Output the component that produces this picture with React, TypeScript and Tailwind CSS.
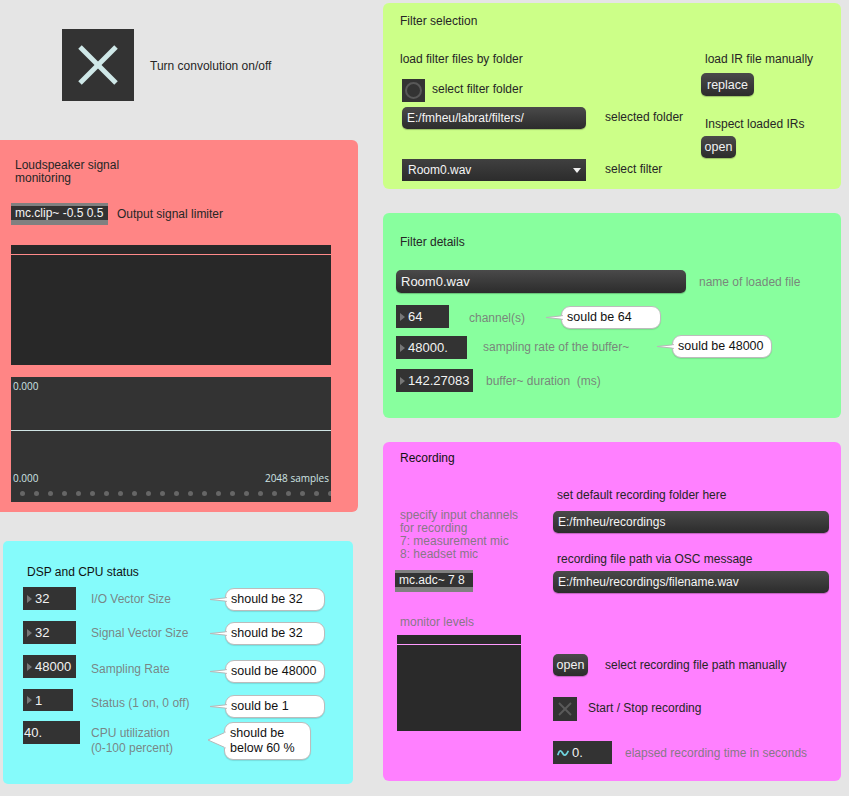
import React from "react";

const GRAY = "text-[#777777]/90";
const DARK = "text-[#262626]";

function NumBox({ value, w, h = "h-[23px]", tri = true }: { value: string; w: string; h?: string; tri?: boolean }) {
  return (
    <div className={`${w} ${h} bg-[#333333] flex items-center shrink-0`}>
      {tri ? (
        <>
          <div className="ml-[4px] w-0 h-0 border-y-[4.5px] border-y-transparent border-l-[5px] border-l-[#777777]" />
          <span className="ml-[3px] text-[13px] text-[#f2f2f2] leading-none">{value}</span>
        </>
      ) : (
        <span className="ml-[1px] text-[13px] text-[#f2f2f2] leading-none">{value}</span>
      )}
    </div>
  );
}

function Bubble({ children, body, h, big = false, mt = "" }: { children: React.ReactNode; body: string; h: number; big?: boolean; mt?: string }) {
  const ptr = big ? 16 : 15;
  const mid = big ? 18 : h / 2;
  const pts = big
    ? `0,${mid} ${ptr + 2},${mid - 8} ${ptr + 2},${mid + 8}`
    : `0,${mid} ${ptr + 2},${mid - 1.8} ${ptr + 2},${mid + 1.8}`;
  return (
    <div className={`flex items-start shrink-0 ${mt}`}>
      <svg width={ptr + 2} height={h} className="-mr-[2px] relative z-10 shrink-0">
        <polygon points={pts} fill="#ffffff" stroke="#b8b8b8" strokeWidth="1" />
        <rect x={ptr + 0.5} y={mid - (big ? 7.5 : 1.3)} width="2" height={big ? 15 : 2.6} fill="#ffffff" />
      </svg>
      <div className={`${body} bg-white rounded-[9px] border border-[#bcbcbc] shadow-[0_1px_1px_rgba(0,0,0,0.12)] text-[12.5px] text-[#111] pl-[5px] flex items-center leading-[15px]`}>
        {children}
      </div>
    </div>
  );
}

function TextField({ value, w, h = "h-[22px]", size = "text-[12px]" }: { value: string; w: string; h?: string; size?: string }) {
  return (
    <div className={`${w} ${h} rounded-[5px] bg-linear-to-b from-[#4a4a4a] to-[#2c2c2c] shadow-[0_1px_1px_rgba(0,0,0,0.25)] flex items-center pl-[5px] ${size} text-[#f5f5f5] shrink-0`}>
      {value}
    </div>
  );
}

function Btn({ label, w, h = "h-[22px]" }: { label: string; w: string; h?: string }) {
  return (
    <div className={`${w} ${h} rounded-[5px] bg-linear-to-b from-[#4a4a4a] to-[#2c2c2c] shadow-[0_1px_1px_rgba(0,0,0,0.25)] flex items-center justify-center text-[12.5px] text-[#f2f2f2] shrink-0`}>
      {label}
    </div>
  );
}

function ObjBox({ text, w }: { text: string; w: string }) {
  return (
    <div className={`${w} h-[22px] bg-[#333333] border-t-[3px] border-b-[5px] border-[#808080] flex items-center pl-[4px] text-[12px] text-[#f5f5f5] leading-none shrink-0`}>
      {text}
    </div>
  );
}

export default function App() {
  const dots = Array.from({ length: 23 });
  return (
    <div className="w-[849px] h-[796px] overflow-hidden bg-[#e5e5e5] flex font-['Liberation_Sans',Arial,sans-serif] text-[12px] leading-[14px]">
      {/* Left column */}
      <div className="w-[358px] flex flex-col shrink-0">
        {/* big toggle */}
        <div className="h-[140px] pt-[29px] pl-[62px] flex items-start">
          <div className="flex items-center">
            <div className="w-[72px] h-[72px] bg-[#333333] flex items-center justify-center">
              <svg width="72" height="72" viewBox="0 0 72 72">
                <line x1="18" y1="18" x2="54" y2="54" stroke="#cfe8e8" strokeWidth="5" />
                <line x1="54" y1="18" x2="18" y2="54" stroke="#cfe8e8" strokeWidth="5" />
              </svg>
            </div>
            <span className={`ml-[16px] pt-[2px] ${DARK}`}>Turn convolution on/off</span>
          </div>
        </div>

        {/* Loudspeaker panel */}
        <div className="h-[372px] w-[358px] bg-[#ff8585] rounded-r-[6px] flex flex-col">
          <div className={`pl-[15px] pt-[19px] leading-[13px] ${DARK}`}>
            Loudspeaker signal
            <br />
            monitoring
          </div>
          <div className="mt-[18px] ml-[11px] flex items-center">
            <ObjBox text="mc.clip~ -0.5 0.5" w="w-[97px]" />
            <span className={`ml-[9px] ${DARK}`}>Output signal limiter</span>
          </div>
          <div className="mt-[20px] ml-[11px] w-[320px] h-[120px] bg-[#282828] flex flex-col">
            <div className="mt-[9px] h-px bg-[#ff8a8a]" />
          </div>
          <div className="mt-[12px] ml-[11px] w-[320px] h-[125px] bg-[#333333] flex flex-col overflow-hidden font-['Open_Sans',sans-serif] text-[10px] leading-[12px] text-[#cfe4e4]">
            <div className="pt-[3px] pl-[2px]">0.000</div>
            <div className="mt-[38px] h-px bg-[#cfe4e4]" />
            <div className="mt-[41px] px-[2px] flex justify-between">
              <span>0.000</span>
              <span>2048 samples</span>
            </div>
            <div className="mt-[7px] pl-[8.5px] flex gap-[9px]">
              {dots.map((_, i) => (
                <div key={i} className="w-[5px] h-[5px] rounded-full bg-[#666666] shrink-0" />
              ))}
            </div>
          </div>
        </div>

        {/* DSP panel */}
        <div className="mt-[29px] ml-[3px] w-[350px] h-[243px] bg-[#85fbfb] rounded-[5px] flex flex-col">
          <div className="pt-[24px] pl-[24px] text-[#111]">DSP and CPU status</div>
          {/* row 1 */}
          <div className="mt-[8px] ml-[20px] h-[23px] flex items-start">
            <div className="w-[68px] shrink-0"><NumBox value="32" w="w-[53px]" /></div>
            <div className={`w-[119px] shrink-0 mt-[5px] ${GRAY}`}>I/O Vector Size</div>
            <Bubble body="w-[100px] h-[23px]" h={23} mt="mt-[1px]">should be 32</Bubble>
          </div>
          {/* row 2 */}
          <div className="mt-[11px] ml-[20px] h-[23px] flex items-start">
            <div className="w-[68px] shrink-0"><NumBox value="32" w="w-[53px]" /></div>
            <div className={`w-[119px] shrink-0 mt-[5px] ${GRAY}`}>Signal Vector Size</div>
            <Bubble body="w-[100px] h-[23px]" h={23} mt="mt-[1px]">should be 32</Bubble>
          </div>
          {/* row 3 */}
          <div className="mt-[11px] ml-[20px] h-[23px] flex items-start">
            <div className="w-[68px] shrink-0"><NumBox value="48000" w="w-[53px]" /></div>
            <div className={`w-[119px] shrink-0 mt-[7px] ${GRAY}`}>Sampling Rate</div>
            <Bubble body="w-[100px] h-[23px]" h={23} mt="mt-[5px]">sould be 48000</Bubble>
          </div>
          {/* row 4 */}
          <div className="mt-[11px] ml-[20px] h-[22px] flex items-start">
            <div className="w-[68px] shrink-0"><NumBox value="1" w="w-[50px]" h="h-[22px]" /></div>
            <div className={`w-[119px] shrink-0 mt-[7px] ${GRAY}`}>Status (1 on, 0 off)</div>
            <Bubble body="w-[100px] h-[23px]" h={23} mt="mt-[6px]">sould be 1</Bubble>
          </div>
          {/* row 5 */}
          <div className="mt-[10px] ml-[20px] h-[23px] flex items-start">
            <div className="w-[68px] shrink-0"><NumBox value="40." w="w-[57px]" tri={false} /></div>
            <div className={`w-[117px] shrink-0 mt-[5px] leading-[15px] ${GRAY}`}>
              CPU utilization
              <br />
              (0-100 percent)
            </div>
            <Bubble body="w-[87px] h-[38px]" h={38} big mt="mt-[1px]">
              <span>
                should be
                <br />
                below 60 %
              </span>
            </Bubble>
          </div>
        </div>
      </div>

      {/* Right column */}
      <div className="ml-[25px] w-[458px] flex flex-col shrink-0">
        {/* Filter selection */}
        <div className="mt-[3px] h-[186px] bg-[#ccff88] rounded-[6px] flex flex-col">
          <div className={`pt-[11px] pl-[17px] ${DARK}`}>Filter selection</div>
          <div className="mt-[24px] flex">
            <div className="w-[318px] shrink-0 flex flex-col">
              <div className={`pl-[17px] ${DARK}`}>load filter files by folder</div>
              <div className="mt-[13px] ml-[19px] flex items-start">
                <div className="w-[23px] h-[23px] bg-[#333333] flex items-center justify-center shrink-0">
                  <div className="w-[17px] h-[17px] rounded-full border-2 border-[#585858]" />
                </div>
                <span className={`ml-[7px] mt-[3px] ${DARK}`}>select filter folder</span>
              </div>
              <div className="mt-[5px] ml-[19px] flex items-start">
                <TextField value="E:/fmheu/labrat/filters/" w="w-[184px]" />
                <span className={`ml-[19px] mt-[3px] whitespace-nowrap ${DARK}`}>selected folder</span>
              </div>
              <div className="mt-[30px] ml-[19px] flex items-start">
                <div className="w-[184px] h-[22px] bg-linear-to-b from-[#404040] to-[#2c2c2c] flex items-center justify-between pl-[6px] pr-[5px] text-[#f5f5f5] shrink-0">
                  <span>Room0.wav</span>
                  <div className="w-0 h-0 border-x-[4px] border-x-transparent border-t-[5px] border-t-[#f0f0f0]" />
                </div>
                <span className={`ml-[19px] mt-[3px] whitespace-nowrap ${DARK}`}>select filter</span>
              </div>
            </div>
            <div className="flex flex-col">
              <div className={`pl-[4px] ${DARK}`}>load IR file manually</div>
              <div className="mt-[7px]"><Btn label="replace" w="w-[53px]" h="h-[23px]" /></div>
              <div className={`mt-[21px] pl-[4px] ${DARK}`}>Inspect loaded IRs</div>
              <div className="mt-[5px]"><Btn label="open" w="w-[35px]" /></div>
            </div>
          </div>
        </div>

        {/* Filter details */}
        <div className="mt-[24px] h-[205px] bg-[#88ff9e] rounded-[6px] flex flex-col">
          <div className={`pt-[22px] pl-[17px] ${DARK}`}>Filter details</div>
          <div className="mt-[21px] ml-[13px] flex items-center">
            <TextField value="Room0.wav" w="w-[290px]" h="h-[23px]" size="text-[13px]" />
            <span className={`ml-[13px] ${GRAY}`}>name of loaded file</span>
          </div>
          <div className="mt-[12px] ml-[13px] h-[23px] flex items-start">
            <NumBox value="64" w="w-[53px]" />
            <div className={`ml-[20px] w-[77px] shrink-0 mt-[6px] ${GRAY}`}>channel(s)</div>
            <Bubble body="w-[100px] h-[23px]" h={23} mt="mt-[1px]">sould be 64</Bubble>
          </div>
          <div className="mt-[8px] ml-[13px] h-[23px] flex items-start">
            <NumBox value="48000." w="w-[71px]" />
            <div className={`ml-[16px] w-[174px] shrink-0 mt-[4px] ${GRAY}`}>sampling rate of the buffer~</div>
            <Bubble body="w-[100px] h-[23px]" h={23} mt="-mt-[1px]">sould be 48000</Bubble>
          </div>
          <div className="mt-[10px] ml-[13px] h-[23px] flex items-start">
            <NumBox value="142.27083" w="w-[77px]" />
            <div className={`ml-[13px] shrink-0 mt-[5px] whitespace-pre ${GRAY}`}>buffer~ duration  (ms)</div>
          </div>
        </div>

        {/* Recording */}
        <div className="mt-[24px] h-[339px] bg-[#ff80ff] rounded-[6px] flex flex-col">
          <div className="pt-[9px] pl-[17px] text-[#111]">Recording</div>
          <div className="flex">
            <div className="w-[170px] shrink-0 flex flex-col">
              <div className={`mt-[44px] pl-[17px] leading-[13px] ${GRAY}`}>
                specify input channels
                <br />
                for recording
                <br />
                7: measurement mic
                <br />
                8: headset mic
              </div>
              <div className="mt-[9px] ml-[12px]">
                <ObjBox text="mc.adc~ 7 8" w="w-[78px]" />
              </div>
              <div className={`mt-[23px] pl-[17px] ${GRAY}`}>monitor levels</div>
              <div className="mt-[6px] ml-[14px] w-[124px] h-[96px] bg-[#2a2a2a] flex flex-col">
                <div className="mt-[9px] h-px bg-[#ff9aff]" />
              </div>
            </div>
            <div className="flex flex-col">
              <div className={`mt-[23px] pl-[4px] ${DARK}`}>set default recording folder here</div>
              <div className="mt-[9px]"><TextField value="E:/fmheu/recordings" w="w-[276px]" /></div>
              <div className={`mt-[19px] pl-[4px] ${DARK}`}>recording file path via OSC message</div>
              <div className="mt-[5px]"><TextField value="E:/fmheu/recordings/filename.wav" w="w-[276px]" /></div>
              <div className="mt-[61px] flex items-center">
                <Btn label="open" w="w-[35px]" />
                <span className={`ml-[17px] ${DARK}`}>select recording file path manually</span>
              </div>
              <div className="mt-[21px] flex items-center">
                <div className="w-[24px] h-[24px] bg-[#333333] shrink-0">
                  <svg width="24" height="24" viewBox="0 0 24 24">
                    <line x1="6" y1="6" x2="18" y2="18" stroke="#5a5a5a" strokeWidth="2" />
                    <line x1="18" y1="6" x2="6" y2="18" stroke="#5a5a5a" strokeWidth="2" />
                  </svg>
                </div>
                <span className={`ml-[11px] pb-[2px] ${DARK}`}>Start / Stop recording</span>
              </div>
              <div className="mt-[20px] flex items-center">
                <div className="w-[59px] h-[23px] bg-[#333333] flex items-center shrink-0">
                  <svg width="12" height="8" viewBox="0 0 12 8" className="ml-[4px]">
                    <path d="M1 5.5 C2.5 1, 4 1, 5.5 4 S9 7, 11 2.5" fill="none" stroke="#6fd3dc" strokeWidth="1.8" strokeLinecap="round" />
                  </svg>
                  <span className="ml-[3px] text-[13px] text-[#f2f2f2] leading-none">0.</span>
                </div>
                <span className={`ml-[13px] ${GRAY}`}>elapsed recording time in seconds</span>
              </div>
            </div>
          </div>
        </div>
      </div>
    </div>
  );
}
